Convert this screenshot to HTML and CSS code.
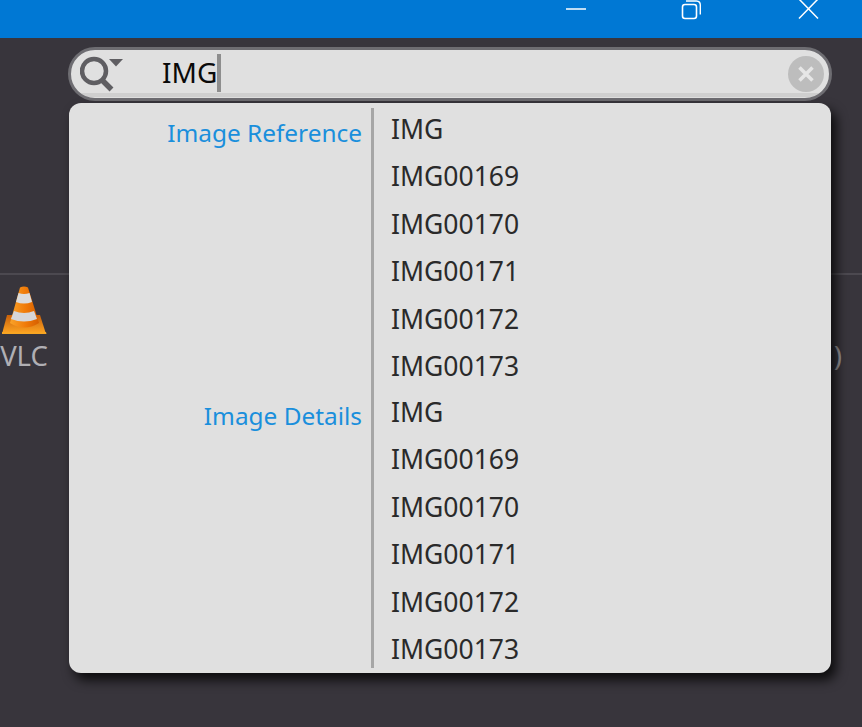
FILE: index.html
```html
<!DOCTYPE html>
<html lang="en">
<head>
<meta charset="utf-8">
<title>Search</title>
<link rel="stylesheet" href="styles.css">
</head>
<body>
<div class="app">
  <header class="titlebar">
    <button class="win-btn" aria-label="Minimize"><svg width="20" height="20" viewBox="0 0 20 20"><path d="M0 9H20" stroke="#fff" stroke-width="1.500" fill="none"/></svg></button>
    <button class="win-btn" aria-label="Restore"><svg width="20" height="20" viewBox="0 0 20 20"><rect x="1.500" y="4.500" width="14" height="14" rx="2.500" stroke="#fff" stroke-width="1.600" fill="none"/><path d="M5 1H15.500A4 4 0 0 1 19.300 5V14.500" stroke="#fff" stroke-width="1.400" fill="none"/></svg></button>
    <button class="win-btn" aria-label="Close"><svg width="22" height="22" viewBox="0 0 22 22"><path d="M1 -1L20 18.500M20 -1L1 18.500" stroke="#fff" stroke-width="1.500" fill="none"/></svg></button>
  </header>
  <main class="workspace">
    <div class="toolbar-space"></div>
    <div class="shelf">
      <div class="app-item">
        <svg class="cone" width="46" height="50" viewBox="0 0 46 50">
          <defs>
            <linearGradient id="org" x1="0" x2="1" y1="0" y2="0"><stop offset="0" stop-color="#f9a32a"/><stop offset=".55" stop-color="#f07a08"/><stop offset="1" stop-color="#d65f00"/></linearGradient>
            <linearGradient id="base" x1="0" x2="0" y1="0" y2="1"><stop offset="0" stop-color="#c9600a"/><stop offset="1" stop-color="#ffa723"/></linearGradient>
          </defs>
          <path d="M6 29H39L45 48H1Z" fill="url(#base)"/>
          <path d="M1 46H45L45.500 48H1Z" fill="#f8a522"/>
          <path d="M19 1.500Q23 -0.500 27 1.500L38 37Q23 46 9 37Z" fill="url(#org)"/>
          <path d="M17.500 7Q23 9 28.500 7L31 16Q23 19 15 16Z" fill="#dcdcdc"/>
          <path d="M13 25Q23 29 33 25L36 33Q23 38 10 33Z" fill="#d6d6d8"/>
        </svg>
        <span class="app-label">VLC</span>
      </div>
      <span class="app-label clipped">)</span>
    </div>
  </main>
  <div class="search-layer">
    <div class="searchbar">
      <span class="search-icon">
        <svg width="44" height="38" viewBox="0 0 44 38"><circle cx="14" cy="16" r="12" stroke="#5f5e62" stroke-width="4.500" fill="none"/><path d="M22 25L31.500 34.500" stroke="#5f5e62" stroke-width="5.500" fill="none"/><path d="M29 4H43L36 11.500Z" fill="#5f5e62"/></svg>
      </span>
      <span class="query">IMG</span><span class="caret"></span>
      <button class="clear" aria-label="Clear"><svg width="18" height="18" viewBox="0 0 18 18"><path d="M2.500 2.500L15.500 15.500M15.500 2.500L2.500 15.500" stroke="#e6e6e6" stroke-width="3.500" fill="none"/></svg></button>
    </div>
    <section class="results">
      <div class="group">
        <div class="group-label">Image Reference</div>
        <ul class="values">
          <li>IMG</li><li>IMG00169</li><li>IMG00170</li><li>IMG00171</li><li>IMG00172</li><li>IMG00173</li>
        </ul>
      </div>
      <div class="group">
        <div class="group-label">Image Details</div>
        <ul class="values">
          <li>IMG</li><li>IMG00169</li><li>IMG00170</li><li>IMG00171</li><li>IMG00172</li><li>IMG00173</li>
        </ul>
      </div>
    </section>
  </div>
</div>
</body>
</html>
```
FILE: styles.css
```css
* { box-sizing: border-box; }
html, body { margin: 0; height: 100%; }
body { font-family: "Noto Sans", "DejaVu Sans", sans-serif; background: #38353c; overflow: hidden; }
.app { position: relative; width: 862px; height: 727px; overflow: hidden; }

.titlebar { height: 38px; background: #0078d4; display: flex; overflow: hidden; padding-left: 566px; }
.win-btn { width: 20px; height: 20px; padding: 0; border: 0; background: none; display: block; }
.win-btn svg { display: block; }
.win-btn:nth-child(1) { margin-right: 95px; }
.win-btn:nth-child(2) { margin-right: 97px; }

.toolbar-space { height: 237px; border-bottom: 2px solid #4c4950; }
.shelf { display: flex; justify-content: space-between; padding-top: 11px; }
.app-item { display: flex; flex-direction: column; align-items: center; width: 48px; }
.cone { display: block; margin-bottom: 2px; }
.app-label { color: #b0afb4; font-size: 27.500px; line-height: 36px; }
.clipped { margin-top: 52px; margin-right: 20px; color: #98979c; }

.search-layer { position: absolute; left: 68px; top: 47px; width: 764px; }
.searchbar { height: 54px; border: 3px solid #6e6d72; border-radius: 27px; background: linear-gradient(#e0e0e0 0 43px, #cfcfcf 43px 47px, #e0e0e0 47px); display: flex; align-items: center; padding-left: 9px; position: relative; }
.search-icon { display: block; width: 44px; height: 38px; }
.search-icon svg { display: block; }
.query { margin-left: 38px; font-size: 28px; color: #0a0a0a; line-height: 37px; margin-top: -4px; }
.caret { width: 4px; height: 38px; background: #8e8e8e; margin-top: -2px; }
.clear { margin-left: auto; margin-right: 5px; width: 36px; height: 36px; border-radius: 50%; border: 0; background: #bdbdbd; padding: 0; display: flex; align-items: center; justify-content: center; }
.clear svg { display: block; }

.results { margin: 2px 1px 0; height: 570px; background: #e0e0e0; border-radius: 12px; padding: 5px 0; box-shadow: 5px 7px 12px rgba(0,0,0,.8); position: relative; }
.group { display: grid; grid-template-columns: 302px 1fr; grid-template-rows: minmax(0, 1fr); height: 283px; }
.group:last-child { height: 277px; }
.group-label { text-align: right; padding: 8px 9px 0 0; color: #1a8fdc; font-size: 24.400px; line-height: 34px; }
.values { list-style: none; margin: 0; padding: 1px 0 0 17px; border-left: 3px solid #a6a6a6; min-height: 0; }
.values li { height: 47.400px; line-height: 41px; font-size: 26.500px; color: #2a2a2a; }
```
